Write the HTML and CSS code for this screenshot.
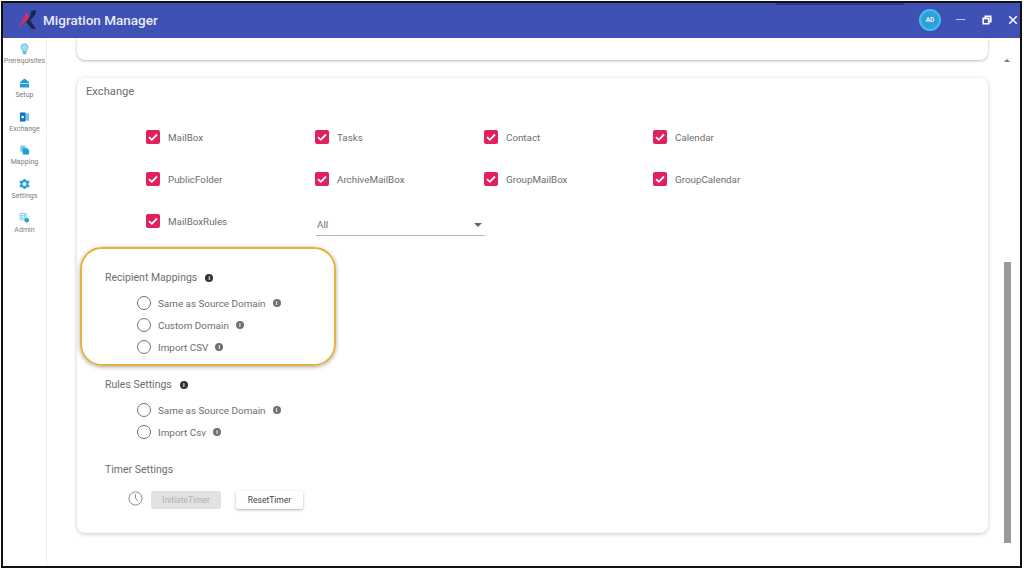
FILE: index.html
```html
<!DOCTYPE html>
<html lang="en">
<head>
<meta charset="utf-8">
<title>Migration Manager</title>
<link rel="stylesheet" href="styles.css">
</head>
<body>
<div class="frame">
  <header class="topbar">
    <svg class="logo" viewBox="0 0 20 20"><path d="M1 18 L10 2 L12 9 L6 13 Z" fill="#e0285f"/><path d="M14 1 L19 0 C19 5 16 8 13 10 L19 19 L15 19 L9 12 C12 9 14 6 14 1 Z" fill="#1c2452"/></svg>
    <span class="title">Migration Manager</span>
    <span class="topbar-tail">
      <span class="avatar">AD</span>
      <span class="win-min"></span>
      <svg class="win-icon" viewBox="0 0 12 12"><path d="M4 1.500h6.500v6.500h-2.500v2.500h-6.500v-6.500h2.500z M4 4v-2.500 M4 4h4v4" fill="none" stroke="#fff" stroke-width="2"/></svg>
      <svg class="win-icon" viewBox="0 0 12 12"><path d="M1.500 1.500l9 9M10.500 1.500l-9 9" fill="none" stroke="#fff" stroke-width="1.800"/></svg>
    </span>
    <span class="progress-line"></span>
  </header>
  <div class="content">
    <nav class="sidebar">
      <a class="nav-item"><svg viewBox="0 0 12 14"><path d="M6 1a4 4 0 0 0-2.200 7.300V10h4.400V8.300A4 4 0 0 0 6 1z" fill="#9fe0f2" stroke="#35b4dc"/><rect x="4" y="11" width="4" height="2" fill="#35b4dc"/></svg><span>Prerequisites</span></a>
      <a class="nav-item"><svg viewBox="0 0 12 12"><path d="M6 1 L11 5V11H1V5Z" fill="#1f9fd2"/><rect x="1" y="6" width="10" height="1" fill="#bfe8f5"/></svg><span>Setup</span></a>
      <a class="nav-item"><svg viewBox="0 0 12 12"><rect x="5" y="2" width="6" height="8" fill="#6cc4ec"/><rect x="1" y="1" width="6" height="10" fill="#1673c4"/><circle cx="4" cy="6" r="1.500" fill="#fff"/></svg><span>Exchange</span></a>
      <a class="nav-item"><svg viewBox="0 0 12 12"><path d="M1.500 1h5l1 2v5h-6z" fill="#7cc9ec"/><path d="M4 4h5l2 2v5H4z" fill="#1f9fd2"/></svg><span>Mapping</span></a>
      <a class="nav-item"><svg viewBox="0 0 12 12"><circle cx="6" cy="6" r="3.400" fill="none" stroke="#1f9fd2" stroke-width="2.400"/><path d="M6 .5v2M6 9.500v2M.8 3l1.700 1M9.500 8l1.700 1M.8 9l1.700-1M9.500 4l1.700-1" stroke="#1f9fd2" stroke-width="2"/></svg><span>Settings</span></a>
      <a class="nav-item"><svg viewBox="0 0 12 12"><path d="M1 1h7v7H1zM1 3.500h7M1 6h7M3.500 1v7M6 1v7" fill="none" stroke="#6cc4ec" stroke-width=".8"/><circle cx="8.500" cy="8.500" r="2.500" fill="#1f9fd2"/></svg><span>Admin</span></a>
    </nav>
    <main class="main">
      <div class="scroll-area">
        <div class="stub-card"></div>
        <section class="card">
          <h2 class="card-title">Exchange</h2>
          <div class="check-grid">
            <label class="check"><span class="box"><svg viewBox="0 0 14 14"><path d="M3 7.200l2.800 2.600L11 4.500" fill="none" stroke="#fff" stroke-width="1.800"/></svg></span>MailBox</label>
            <label class="check"><span class="box"><svg viewBox="0 0 14 14"><path d="M3 7.200l2.800 2.600L11 4.500" fill="none" stroke="#fff" stroke-width="1.800"/></svg></span>Tasks</label>
            <label class="check"><span class="box"><svg viewBox="0 0 14 14"><path d="M3 7.200l2.800 2.600L11 4.500" fill="none" stroke="#fff" stroke-width="1.800"/></svg></span>Contact</label>
            <label class="check"><span class="box"><svg viewBox="0 0 14 14"><path d="M3 7.200l2.800 2.600L11 4.500" fill="none" stroke="#fff" stroke-width="1.800"/></svg></span>Calendar</label>
            <label class="check"><span class="box"><svg viewBox="0 0 14 14"><path d="M3 7.200l2.800 2.600L11 4.500" fill="none" stroke="#fff" stroke-width="1.800"/></svg></span>PublicFolder</label>
            <label class="check"><span class="box"><svg viewBox="0 0 14 14"><path d="M3 7.200l2.800 2.600L11 4.500" fill="none" stroke="#fff" stroke-width="1.800"/></svg></span>ArchiveMailBox</label>
            <label class="check"><span class="box"><svg viewBox="0 0 14 14"><path d="M3 7.200l2.800 2.600L11 4.500" fill="none" stroke="#fff" stroke-width="1.800"/></svg></span>GroupMailBox</label>
            <label class="check"><span class="box"><svg viewBox="0 0 14 14"><path d="M3 7.200l2.800 2.600L11 4.500" fill="none" stroke="#fff" stroke-width="1.800"/></svg></span>GroupCalendar</label>
            <label class="check"><span class="box"><svg viewBox="0 0 14 14"><path d="M3 7.200l2.800 2.600L11 4.500" fill="none" stroke="#fff" stroke-width="1.800"/></svg></span>MailBoxRules</label>
            <div class="select"><span>All</span><span class="caret"></span></div>
          </div>
          <div class="group group-recipient">
            <div class="group-title">Recipient Mappings <span class="info dark">i</span></div>
            <label class="radio"><span class="ring"></span>Same as Source Domain <span class="info">i</span></label>
            <label class="radio"><span class="ring"></span>Custom Domain <span class="info">i</span></label>
            <label class="radio"><span class="ring"></span>Import CSV <span class="info">i</span></label>
            <div class="highlight"></div>
          </div>
          <div class="group group-rules">
            <div class="group-title">Rules Settings <span class="info dark">i</span></div>
            <label class="radio"><span class="ring"></span>Same as Source Domain <span class="info">i</span></label>
            <label class="radio"><span class="ring"></span>Import Csv <span class="info">i</span></label>
          </div>
          <div class="group group-timer">
            <div class="group-title">Timer Settings</div>
            <div class="timer-row">
              <svg class="clock" viewBox="0 0 16 16"><circle cx="8" cy="8" r="7" fill="none" stroke="#8a8a8a" stroke-width="1"/><path d="M8 3.500V8l3 2.500" fill="none" stroke="#8a8a8a" stroke-width="1"/></svg>
              <button class="btn btn-disabled" type="button">InitiateTimer</button>
              <button class="btn btn-reset" type="button">ResetTimer</button>
            </div>
          </div>
        </section>
      </div>
      <div class="scrollbar">
        <span class="arrow"></span>
        <span class="thumb"></span>
      </div>
    </main>
  </div>
</div>
</body>
</html>
```
FILE: styles.css
```css
* { box-sizing: border-box; }
html, body { margin: 0; height: 571px; overflow: hidden; background: #fff; }
body { font-family: Roboto, "Liberation Sans", sans-serif; color: #6e6e6e; padding: 1px 0 0 1px; }

.frame {
  width: 1021px;
  height: 567px;
  border: 2px solid #111;
  display: flex;
  flex-direction: column;
  overflow: hidden;
}

.topbar {
  position: relative;
  height: 35px;
  flex: none;
  background: #3f51b5;
  display: flex;
  align-items: center;
  padding: 0 0 2px 14px;
  color: #fff;
}
.logo { width: 20px; height: 20px; }
.title { margin-left: 6px; font-size: 13.500px; font-weight: 500; color: #e8ebf8; }
.topbar-tail { margin-left: auto; display: flex; align-items: center; }
.avatar {
  width: 22px; height: 22px; border-radius: 50%;
  background: #2f9fd8; border: 2px solid #3cc2ee;
  font-size: 6.500px; font-weight: 700; color: #e6f6ff;
  display: flex; align-items: center; justify-content: center;
}
.win-min { width: 9px; height: 1px; background: #c5cbe8; margin-left: 15px; }
.win-icon { width: 10px; height: 10px; margin-left: 17px; }
.win-icon:last-child { margin-left: 16px; margin-right: 2px; }
.progress-line {
  position: absolute; top: 0; left: 773px; width: 128px; height: 2px;
  background: #2b3a8c;
}

.content { flex: 1; display: flex; min-height: 0; }
.sidebar {
  width: 44px; flex: none;
  border-right: 1px solid #f1f1f1;
  padding-top: 5px;
  display: flex; flex-direction: column;
}
.nav-item {
  height: 33.800px;
  display: flex; flex-direction: column; align-items: center;
  font-size: 7.100px; color: #808080;
  gap: 1px;
  white-space: nowrap;
}
.nav-item svg { width: 11px; height: 12px; flex: none; }

.main { flex: 1; min-width: 0; display: flex; }
.scroll-area { flex: 1; min-width: 0; padding: 0 12px 0 30px; overflow: hidden; }
.stub-card {
  height: 22px;
  background: #fff;
  border-radius: 0 0 8px 8px;
  box-shadow: 0 1px 3px rgba(0,0,0,.28);
}
.card {
  margin-top: 18px;
  height: 455px;
  background: #fff;
  border-radius: 8px;
  box-shadow: 0 1px 4px rgba(0,0,0,.22);
  padding: 6px 0 0 9px;
}
.card-title { margin: 0; font-size: 11.200px; font-weight: 400; line-height: 15px; color: #6e6e6e; }

.check-grid {
  margin: 26px 0 0 60px;
  display: grid;
  grid-template-columns: repeat(4, 169px);
  grid-auto-rows: 42px;
}
.check { display: flex; align-items: center; height: 24px; font-size: 9.800px; color: #6e6e6e; }
.box {
  width: 14px; height: 14px; margin-right: 8px; flex: none;
  background: #e2205c; border-radius: 2px; display: flex;
}
.select {
  width: 169px; height: 24px; margin: 3px 0 0 1px;
  display: flex; align-items: center; justify-content: space-between;
  padding: 2px 3px 0 1px;
  border-bottom: 1px solid #b5b5b5;
  font-size: 9.800px;
}
.caret { border: 4px solid transparent; border-top: 4.500px solid #666; border-bottom: 0; }

.group { padding-left: 19px; position: relative; }
.group-recipient { margin-top: 19px; }
.group-rules { margin-top: 19px; }
.group-timer { margin-top: 19px; }
.group-title { height: 16px; font-size: 10.500px; line-height: 16px; color: #6e6e6e; display: flex; align-items: center; }
.group-title .info { margin-left: 8px; }
.group-recipient .group-title { margin-bottom: 6px; }
.group-rules .group-title { margin-bottom: 6px; }

.radio { display: flex; align-items: center; height: 22px; margin-left: 32px; font-size: 9.900px; color: #6e6e6e; }
.ring {
  width: 14px; height: 14px; flex: none; border-radius: 50%;
  border: 1.800px solid #707070; margin-right: 7px;
}
.radio .info { margin-left: 7px; }
.info {
  width: 8px; height: 8px; border-radius: 50%;
  background: #707070; color: #fff;
  font-size: 6px; font-weight: 700; line-height: 8px; text-align: center;
  flex: none; display: inline-block;
}
.info.dark { background: #333; }

.highlight {
  position: absolute;
  left: -6px; top: -23px; width: 256px; height: 119px;
  border: 2px solid #e9b13b;
  border-radius: 22px;
  box-shadow: 0 1px 4px rgba(0,0,0,.35);
  pointer-events: none;
}

.timer-row { display: flex; align-items: center; margin: 13px 0 0 23px; }
.clock { width: 15px; height: 15px; margin-top: -3px; }
.btn {
  font-family: inherit; font-size: 8.500px; height: 18px; border: 0; border-radius: 2px; padding: 0;
}
.btn-disabled { width: 70px; margin-left: 8px; background: #e2e2e2; color: #b0b0b0; }
.btn-reset { width: 67px; margin-left: 15px; background: #fff; color: #444; box-shadow: 0 1px 3px rgba(0,0,0,.3); }

.scrollbar { width: 15px; flex: none; position: relative; margin-right: 5px; }
.arrow {
  position: absolute; top: 21px; left: 4px;
  border: 3px solid transparent; border-bottom: 3.500px solid #777; border-top: 0;
}
.thumb {
  position: absolute; top: 224px; bottom: 23px; left: 4px; width: 7px; background: #9a9a9a;
}
```
